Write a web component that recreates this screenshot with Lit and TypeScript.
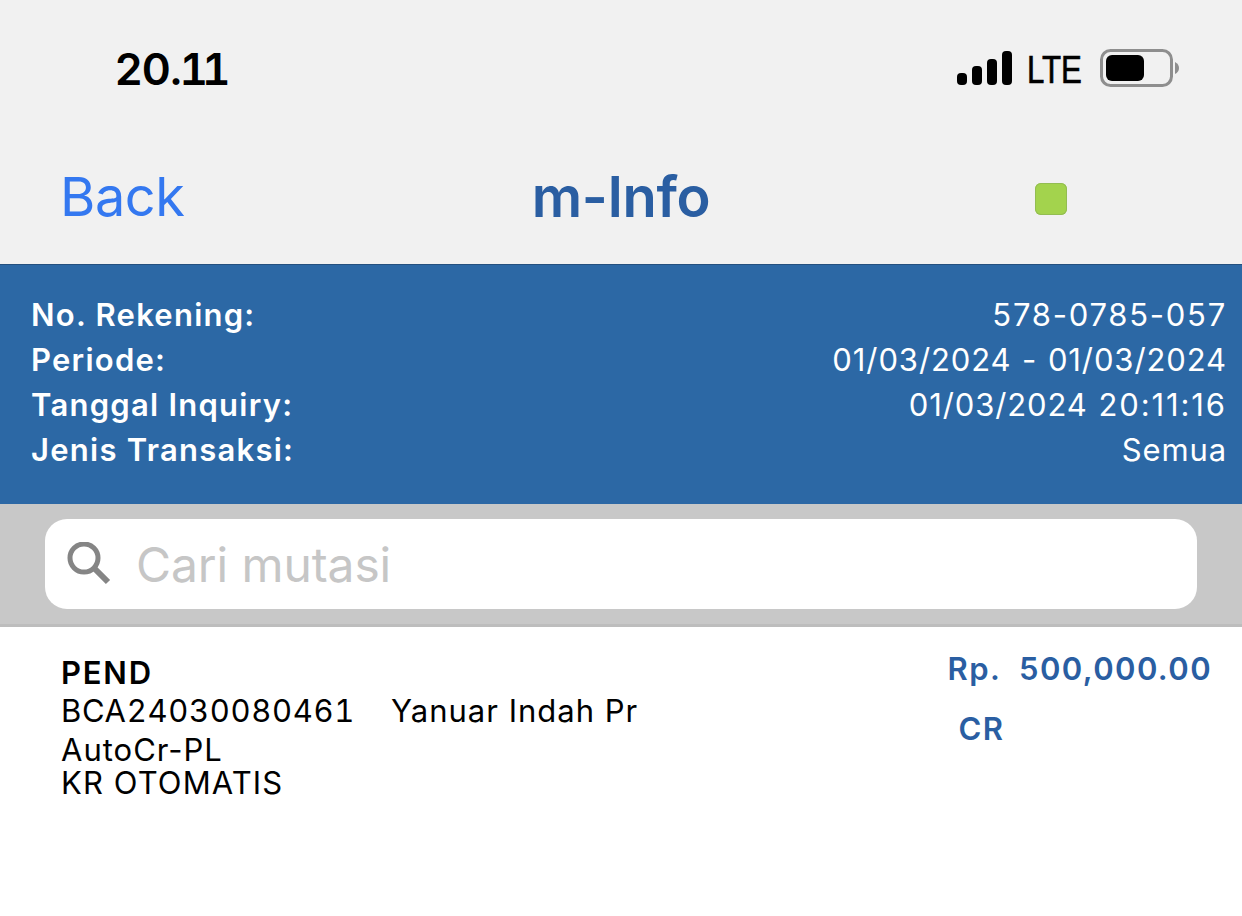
import { LitElement, html, css } from "lit";
import { customElement } from "lit/decorators.js";

@customElement("app-root")
export class AppRoot extends LitElement {
  static styles = css`
    :host { display: block; width: 1242px; height: 916px; background: #fff; font-family: Inter, "Liberation Sans", sans-serif; overflow: hidden; }
    .top { background: #f1f1f1; height: 265px; box-sizing: border-box; border-bottom: 1px solid #24507f; }
    .status { height: 130px; box-sizing: border-box; padding: 42px 62px 0 115px; display: flex; justify-content: space-between; align-items: flex-start; }
    .time { font-size: 44px; line-height: 54px; font-weight: 600; color: #000; letter-spacing: -0.6px; }
    .ones { font-variant-numeric: tabular-nums; letter-spacing: -6px; margin-left: -3px; }
    .right { display: flex; align-items: center; gap: 0; margin-top: 7px; }
    .lte { font-family: "Liberation Sans", sans-serif; font-size: 39px; line-height: 38px; color: #000; margin: 0 16px 0 15px; transform: translateY(2px) scaleX(0.8); transform-origin: left center; width: 57px; -webkit-text-stroke: 0.7px #000; }
    .nav { display: grid; grid-template-columns: 1fr auto 1fr; align-items: center; height: 134px; padding: 0 62px; }
    .back { font-size: 54px; line-height: 64px; color: #3478f0; font-weight: 400; letter-spacing: -0.4px; margin-left: -2px; }
    .title { font-size: 56px; line-height: 64px; font-weight: 600; color: #2a5ea2; letter-spacing: -0.4px; }
    .dot { justify-self: end; margin: 4px 113px 0 0; width: 32px; height: 32px; border-radius: 6px; background: #a3d34d; box-shadow: inset 0 0 0 1px #93bd52; }
    .info { background: #2c68a5; height: 239px; box-sizing: border-box; padding: 27px 15px 0 31px; display: grid; grid-template-columns: auto 1fr; grid-auto-rows: 45px; color: #fff; font-size: 31px; line-height: 45px; letter-spacing: 0.9px; }
    .info b { font-weight: 600; letter-spacing: 1.25px; }
    .v { text-align: right; font-weight: 400; word-spacing: 1px; }
    .acct { letter-spacing: 1.75px; }
    .clock { letter-spacing: 1.9px; }
    .searchbar { background: #c8c8c8; height: 123px; box-sizing: border-box; padding: 15px 45px 0; border-bottom: 3px solid #bdbdbd; }
    .field { height: 90px; background: #fff; border-radius: 22px; display: flex; align-items: center; padding-left: 22px; gap: 25px; }
    .ph { font-size: 48px; color: #c6c6c6; line-height: 54px; letter-spacing: -0.1px; margin-top: 2px; }
    .row { display: flex; justify-content: space-between; padding: 29px 30px 0 61px; }
    .tx { font-size: 31px; color: #000; letter-spacing: 1px; line-height: 33px; }
    .tx b { display: block; font-weight: 600; line-height: 34px; letter-spacing: 1.8px; }
    .ref { display: flex; gap: 36px; margin-top: 3px; line-height: 36px; }
    .code { font-variant-numeric: tabular-nums; letter-spacing: 0.65px; }
    .auto { margin-top: 5px; line-height: 32px; }
    .last { letter-spacing: 1.1px; }
    .amount { color: #2a5ea2; font-size: 31px; font-weight: 600; letter-spacing: 1.4px; line-height: 36px; margin-top: -5px; white-space: pre; }
    .cr { margin: 24px 0 0 11px; }
  `;

  render() {
    return html`
      <div class="top">
        <div class="status">
          <div class="time">20.<span class="ones">11</span></div>
          <div class="right">
            <svg width="56" height="36" viewBox="0 0 56 36"><g fill="#000">
              <rect x="1" y="23" width="10" height="12" rx="4"/>
              <rect x="16" y="16" width="10" height="19" rx="4"/>
              <rect x="31" y="9" width="10" height="26" rx="4"/>
              <rect x="46" y="1" width="10" height="34" rx="4"/>
            </g></svg>
            <div class="lte">LTE</div>
            <svg width="80" height="38" viewBox="0 0 80 38">
              <rect x="1.5" y="1.5" width="70" height="35" rx="9" fill="none" stroke="#8e8e8e" stroke-width="3"/>
              <rect x="6" y="6" width="38" height="26" rx="6" fill="#000"/>
              <path d="M75 13 Q79 15 79 19 Q79 23 75 25 Z" fill="#8e8e8e"/>
            </svg>
          </div>
        </div>
        <div class="nav">
          <div class="back">Back</div>
          <div class="title">m-Info</div>
          <div class="dot"></div>
        </div>
      </div>
      <div class="info">
        <b>No. Rekening:</b><div class="v acct">578-0785-057</div>
        <b>Periode:</b><div class="v">01/03/2024 - 01/03/2024</div>
        <b>Tanggal Inquiry:</b><div class="v">01/03/2024 <span class="clock">20:11:16</span></div>
        <b>Jenis Transaksi:</b><div class="v">Semua</div>
      </div>
      <div class="searchbar">
        <div class="field">
          <svg width="44" height="44" viewBox="0 0 44 44" fill="none" stroke="#858585">
            <circle cx="17" cy="16" r="14" stroke-width="5"/>
            <path d="M27 26 L41 40" stroke-width="6"/>
          </svg>
          <div class="ph">Cari mutasi</div>
        </div>
      </div>
      <div class="row">
        <div class="tx">
          <b>PEND</b>
          <div class="ref"><span class="code">BCA24030080461</span><span>Yanuar Indah Pr</span></div>
          <div class="auto">AutoCr-PL</div>
          <div class="last">KR OTOMATIS</div>
        </div>
        <div class="amount"><div>Rp.  500,000.00</div><div class="cr">CR</div></div>
      </div>
    `;
  }
}
